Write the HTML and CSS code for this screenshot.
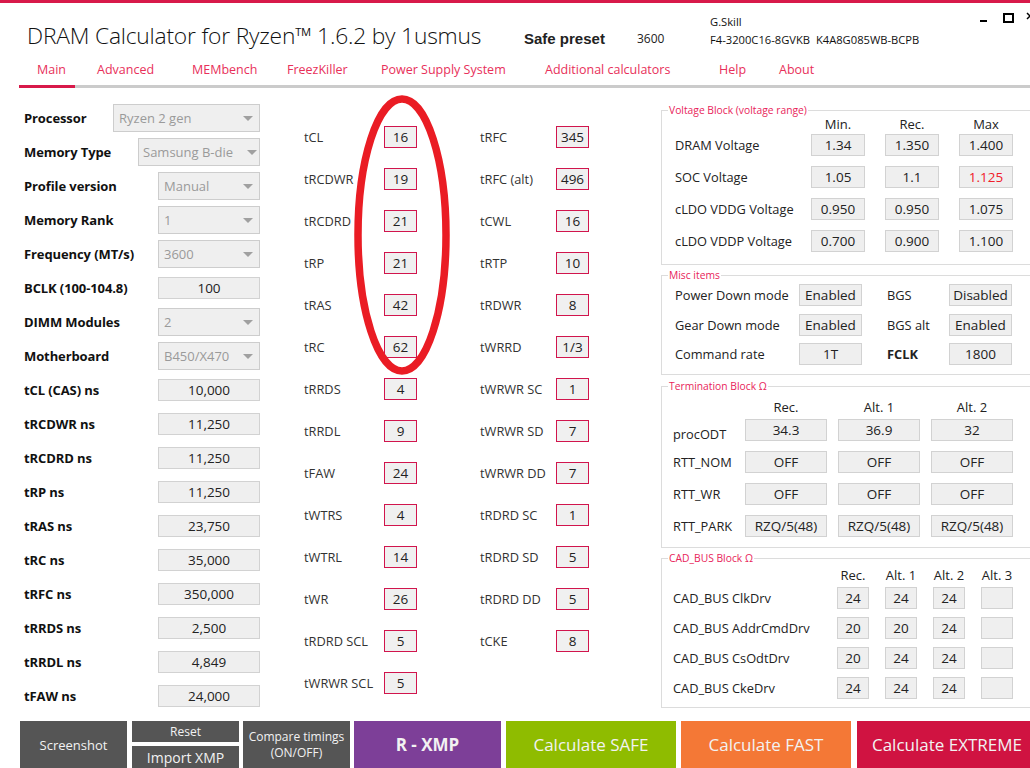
FILE: index.html
```html
<!DOCTYPE html>
<html>
<head>
<meta charset="utf-8">
<link rel="stylesheet" href="styles.css">
</head>
<body>
<div class="topline"></div>
<header class="header">
  <h1 class="title">DRAM Calculator for Ryzen™ 1.6.2 by 1usmus</h1>
  <div class="preset"><span class="preset-label">Safe preset</span><span class="preset-val">3600</span></div>
  <div class="module"><div>G.Skill</div><div>F4-3200C16-8GVKB&nbsp; K4A8G085WB-BCPB</div></div>
  <svg class="winctl" width="60" height="24" viewBox="0 0 60 24">
    <rect x="10" y="15" width="7" height="2" fill="#000"/>
    <rect x="34" y="9" width="9" height="8" fill="none" stroke="#000" stroke-width="2"/>
    <path d="M57 8 L63 14 M63 8 L57 14" stroke="#000" stroke-width="1.5"/>
  </svg>
</header>
<nav class="tabs">
  <span class="tab first">Main</span>
  <span class="tab">Advanced</span>
  <span class="tab">MEMbench</span>
  <span class="tab">FreezKiller</span>
  <span class="tab">Power Supply System</span>
  <span class="tab">Additional calculators</span>
  <span class="tab">Help</span>
  <span class="tab">About</span>
</nav>
<div class="tabline"><div class="tabline-active"></div></div>

<main class="main">
  <section class="left">
    <div class="lrow"><span class="llabel">Processor</span><div class="combo w147"><span>Ryzen 2 gen</span><i class="arrow"></i></div></div>
    <div class="lrow"><span class="llabel">Memory Type</span><div class="combo w122"><span>Samsung B-die</span><i class="arrow"></i></div></div>
    <div class="lrow"><span class="llabel">Profile version</span><div class="combo"><span>Manual</span><i class="arrow"></i></div></div>
    <div class="lrow"><span class="llabel">Memory Rank</span><div class="combo"><span>1</span><i class="arrow"></i></div></div>
    <div class="lrow"><span class="llabel">Frequency (MT/s)</span><div class="combo"><span>3600</span><i class="arrow"></i></div></div>
    <div class="lrow"><span class="llabel">BCLK (100-104.8)</span><div class="vbox">100</div></div>
    <div class="lrow"><span class="llabel">DIMM Modules</span><div class="combo"><span>2</span><i class="arrow"></i></div></div>
    <div class="lrow"><span class="llabel">Motherboard</span><div class="combo"><span>B450/X470</span><i class="arrow"></i></div></div>
    <div class="lrow"><span class="llabel">tCL (CAS) ns</span><div class="vbox">10,000</div></div>
    <div class="lrow"><span class="llabel">tRCDWR ns</span><div class="vbox">11,250</div></div>
    <div class="lrow"><span class="llabel">tRCDRD ns</span><div class="vbox">11,250</div></div>
    <div class="lrow"><span class="llabel">tRP ns</span><div class="vbox">11,250</div></div>
    <div class="lrow"><span class="llabel">tRAS ns</span><div class="vbox">23,750</div></div>
    <div class="lrow"><span class="llabel">tRC ns</span><div class="vbox">35,000</div></div>
    <div class="lrow"><span class="llabel">tRFC ns</span><div class="vbox">350,000</div></div>
    <div class="lrow"><span class="llabel">tRRDS ns</span><div class="vbox">2,500</div></div>
    <div class="lrow"><span class="llabel">tRRDL ns</span><div class="vbox">4,849</div></div>
    <div class="lrow"><span class="llabel">tFAW ns</span><div class="vbox">24,000</div></div>
  </section>

  <section class="timings">
    <div class="tcol c1">
      <div class="trow"><span>tCL</span><b class="tbox">16</b></div>
      <div class="trow"><span>tRCDWR</span><b class="tbox">19</b></div>
      <div class="trow"><span>tRCDRD</span><b class="tbox">21</b></div>
      <div class="trow"><span>tRP</span><b class="tbox">21</b></div>
      <div class="trow"><span>tRAS</span><b class="tbox">42</b></div>
      <div class="trow"><span>tRC</span><b class="tbox">62</b></div>
      <div class="trow"><span>tRRDS</span><b class="tbox">4</b></div>
      <div class="trow"><span>tRRDL</span><b class="tbox">9</b></div>
      <div class="trow"><span>tFAW</span><b class="tbox">24</b></div>
      <div class="trow"><span>tWTRS</span><b class="tbox">4</b></div>
      <div class="trow"><span>tWTRL</span><b class="tbox">14</b></div>
      <div class="trow"><span>tWR</span><b class="tbox">26</b></div>
      <div class="trow"><span>tRDRD SCL</span><b class="tbox">5</b></div>
      <div class="trow"><span>tWRWR SCL</span><b class="tbox">5</b></div>
    </div>
    <div class="tcol c2">
      <div class="trow"><span>tRFC</span><b class="tbox">345</b></div>
      <div class="trow"><span>tRFC (alt)</span><b class="tbox">496</b></div>
      <div class="trow"><span>tCWL</span><b class="tbox">16</b></div>
      <div class="trow"><span>tRTP</span><b class="tbox">10</b></div>
      <div class="trow"><span>tRDWR</span><b class="tbox">8</b></div>
      <div class="trow"><span>tWRRD</span><b class="tbox">1/3</b></div>
      <div class="trow"><span>tWRWR SC</span><b class="tbox">1</b></div>
      <div class="trow"><span>tWRWR SD</span><b class="tbox">7</b></div>
      <div class="trow"><span>tWRWR DD</span><b class="tbox">7</b></div>
      <div class="trow"><span>tRDRD SC</span><b class="tbox">1</b></div>
      <div class="trow"><span>tRDRD SD</span><b class="tbox">5</b></div>
      <div class="trow"><span>tRDRD DD</span><b class="tbox">5</b></div>
      <div class="trow"><span>tCKE</span><b class="tbox">8</b></div>
    </div>
    <svg class="ellipse" width="100" height="285" viewBox="0 0 100 285">
      <ellipse cx="49" cy="141" rx="44" ry="136" fill="none" stroke="#ea1c24" stroke-width="7.5"/>
    </svg>
  </section>

  <section class="right">
    <fieldset class="group g-volt">
      <legend>Voltage Block (voltage range)</legend>
      <div class="volt-grid">
        <span></span><span class="hdr">Min.</span><span class="hdr">Rec.</span><span class="hdr">Max</span>
        <span class="rlabel">DRAM Voltage</span><div class="gbox">1.34</div><div class="gbox">1.350</div><div class="gbox">1.400</div>
        <span class="rlabel">SOC Voltage</span><div class="gbox">1.05</div><div class="gbox">1.1</div><div class="gbox red">1.125</div>
        <span class="rlabel">cLDO VDDG Voltage</span><div class="gbox">0.950</div><div class="gbox">0.950</div><div class="gbox">1.075</div>
        <span class="rlabel">cLDO VDDP Voltage</span><div class="gbox">0.700</div><div class="gbox">0.900</div><div class="gbox">1.100</div>
      </div>
    </fieldset>
    <fieldset class="group g-misc">
      <legend>Misc items</legend>
      <div class="misc-grid">
        <span class="rlabel">Power Down mode</span><div class="gbox">Enabled</div><span class="rlabel">BGS</span><div class="gbox">Disabled</div>
        <span class="rlabel">Gear Down mode</span><div class="gbox">Enabled</div><span class="rlabel">BGS alt</span><div class="gbox">Enabled</div>
        <span class="rlabel">Command rate</span><div class="gbox">1T</div><span class="rlabel bold">FCLK</span><div class="gbox">1800</div>
      </div>
    </fieldset>
    <fieldset class="group g-term">
      <legend>Termination Block Ω</legend>
      <div class="term-grid">
        <span></span><span class="hdr">Rec.</span><span class="hdr">Alt. 1</span><span class="hdr">Alt. 2</span>
        <span class="rlabel low">procODT</span><div class="gbox">34.3</div><div class="gbox">36.9</div><div class="gbox">32</div>
        <span class="rlabel">RTT_NOM</span><div class="gbox">OFF</div><div class="gbox">OFF</div><div class="gbox">OFF</div>
        <span class="rlabel">RTT_WR</span><div class="gbox">OFF</div><div class="gbox">OFF</div><div class="gbox">OFF</div>
        <span class="rlabel">RTT_PARK</span><div class="gbox">RZQ/5(48)</div><div class="gbox">RZQ/5(48)</div><div class="gbox">RZQ/5(48)</div>
      </div>
    </fieldset>
    <fieldset class="group g-cad">
      <legend>CAD_BUS Block Ω</legend>
      <div class="cad-grid">
        <span></span><span class="hdr">Rec.</span><span class="hdr">Alt. 1</span><span class="hdr">Alt. 2</span><span class="hdr">Alt. 3</span>
        <span class="rlabel">CAD_BUS ClkDrv</span><div class="gbox">24</div><div class="gbox">24</div><div class="gbox">24</div><div class="gbox"></div>
        <span class="rlabel">CAD_BUS AddrCmdDrv</span><div class="gbox">20</div><div class="gbox">20</div><div class="gbox">24</div><div class="gbox"></div>
        <span class="rlabel">CAD_BUS CsOdtDrv</span><div class="gbox">20</div><div class="gbox">24</div><div class="gbox">24</div><div class="gbox"></div>
        <span class="rlabel">CAD_BUS CkeDrv</span><div class="gbox">24</div><div class="gbox">24</div><div class="gbox">24</div><div class="gbox"></div>
      </div>
    </fieldset>
  </section>
</main>

<footer class="actions">
  <div class="btn gray w107">Screenshot</div>
  <div class="stack w107">
    <div class="btn gray small">Reset</div>
    <div class="btn gray import">Import XMP</div>
  </div>
  <div class="btn gray w107 compare">Compare timings<br>(ON/OFF)</div>
  <div class="btn purple">R - XMP</div>
  <div class="btn green">Calculate SAFE</div>
  <div class="btn orange">Calculate FAST</div>
  <div class="btn crimson">Calculate EXTREME</div>
</footer>
</body>
</html>
```

FILE: styles.css
```css
* { box-sizing: border-box; }
html, body { margin: 0; padding: 0; }
body {
  width: 1030px;
  height: 768px;
  overflow: hidden;
  position: relative;
  background: #fff;
  font-family: "Open Sans", "Noto Sans", sans-serif;
  color: #222;
}
.topline { height: 3px; background: #d8194a; }

.header {
  height: 54px;
  display: flex;
  align-items: flex-start;
  padding-left: 27px;
  position: relative;
}
.title {
  margin: 18px 0 0 0;
  width: 497px;
  flex: none;
  font-size: 22.8px;
  font-weight: 300;
  line-height: 30px;
  color: #111;
  white-space: nowrap;
  letter-spacing: -0.2px;
}
.preset {
  margin-top: 27px;
  display: flex;
  align-items: center;
  line-height: 18px;
  flex: none;
}
.preset-label {
  font-family: "Liberation Sans", Arial, sans-serif;
  font-weight: bold;
  font-size: 15px;
  width: 113px;
}
.preset-val { font-size: 12px; width: 73px; }
.module {
  margin-top: 10px;
  font-size: 11.2px;
  line-height: 18px;
  color: #111;
  white-space: nowrap;
}
.winctl { position: absolute; right: 0; top: 2px; }

.tabs {
  height: 28px;
  display: grid;
  grid-template-columns: 78px 95px 95px 94px 164px 174px 60px auto;
  padding-left: 19px;
  font-size: 12.5px;
  line-height: 25px;
  color: #e8305a;
}
.tab { white-space: nowrap; }
.tab.first { padding-left: 18px; }
.tabline { margin-left: 19px; height: 3px; background: #cbcbcb; }
.tabline-active { width: 56px; height: 3px; background: #d8194a; }

.main { display: flex; height: 633px; }

.left { width: 260px; flex: none; padding: 13px 0 0 24px; }
.lrow {
  height: 34px;
  display: flex;
  align-items: center;
  justify-content: space-between;
}
.llabel { font-weight: 700; font-size: 13px; color: #111; letter-spacing: -0.1px; white-space: nowrap; }
.combo {
  width: 102px;
  height: 28px;
  flex: none;
  border: 1px solid #cdcdcd;
  background: #efefef;
  display: flex;
  align-items: center;
  justify-content: space-between;
  padding: 0 6px 0 5px;
  color: #9a9a9a;
  font-size: 13px;
  white-space: nowrap;
}
.combo.w147 { width: 147px; }
.combo.w122 { width: 122px; padding-left: 4px; padding-right: 2px; }
.arrow {
  width: 0; height: 0;
  border-left: 5px solid transparent;
  border-right: 5px solid transparent;
  border-top: 5px solid #a0a0a0;
  flex: none;
}
.vbox {
  width: 102px;
  height: 22px;
  flex: none;
  border: 1px solid #d2d2d2;
  background: #efefef;
  text-align: center;
  font-size: 13.5px;
  line-height: 20px;
  color: #222;
}

.timings {
  position: relative;
  flex: none;
  margin-left: 44px;
  padding-top: 28px;
  display: flex;
  gap: 63px;
}
.tcol { display: flex; flex-direction: column; }
.trow {
  height: 42px;
  display: flex;
  align-items: center;
  font-size: 12.8px;
  color: #333;
  white-space: nowrap;
}
.c1 .trow span { width: 80px; }
.c2 .trow span { width: 76px; }
.tbox {
  width: 33px;
  height: 22px;
  border: 1px solid #d1154d;
  background: #f0f0f0;
  font-weight: normal;
  text-align: center;
  font-size: 13.5px;
  line-height: 20px;
  color: #222;
}
.ellipse { position: absolute; left: 49px; top: 6px; }

.right { margin-left: 72px; width: 380px; padding-top: 16px; flex: none; }
.group {
  margin: 0;
  padding: 0;
  border: 1px solid #dcdcdc;
  min-width: 0;
}
.group legend {
  font-size: 10.3px;
  line-height: 12px;
  color: #e8245a;
  padding: 0 1px;
  margin-left: 6px;
}
.g-volt { height: 161px; }
.g-misc { height: 106px; margin-top: 4px; }
.g-term { height: 168px; margin-top: 5px; }
.g-cad { height: 156px; margin-top: 4px; }

.hdr { text-align: center; font-size: 13px; height: 16px; line-height: 16px; color: #222; align-self: start; white-space: nowrap; }
.rlabel { font-size: 12.8px; color: #222; white-space: nowrap; align-self: center; }
.rlabel.bold { font-weight: 700; }
.rlabel.low { padding-top: 8px; }
.gbox {
  height: 22px;
  border: 1px solid #d2d2d2;
  background: #efefef;
  text-align: center;
  font-size: 13.5px;
  line-height: 20px;
  color: #222;
  white-space: nowrap;
}
.gbox.red { color: #f0202a; }

.volt-grid {
  margin-left: 13px;
  display: grid;
  grid-template-columns: 116px 54px 54px 54px;
  grid-template-rows: 8px repeat(4, 22px);
  column-gap: 20px;
  row-gap: 10px;
}
.misc-grid {
  margin-left: 13px;
  padding-top: 3px;
  display: grid;
  grid-template-columns: 124px 63px 87px 63px;
  grid-auto-rows: 22px;
  column-gap: 0;
  row-gap: 7.5px;
}
.misc-grid .rlabel:nth-child(4n+3) { padding-left: 25px; }
.term-grid {
  margin-left: 11px;
  padding-top: 7px;
  display: grid;
  grid-template-columns: 61px 82px 82px 82px;
  grid-template-rows: 10px repeat(4, 22px);
  column-gap: 11px;
  row-gap: 10px;
}
.cad-grid {
  margin-left: 11px;
  padding-top: 3px;
  display: grid;
  grid-template-columns: 148px 32px 32px 32px 32px;
  grid-template-rows: 12px repeat(4, 22px);
  column-gap: 16px;
  row-gap: 8px;
}

.actions {
  height: 47px;
  display: flex;
  padding-left: 20px;
}
.btn {
  color: #f2f2f2;
  display: flex;
  align-items: center;
  justify-content: center;
  text-align: center;
  font-size: 17px;
  white-space: nowrap;
  flex: none;
}
.gray { background: #555555; font-size: 13px; }
.w107 { width: 107px; flex: none; }
.stack { display: flex; flex-direction: column; gap: 4px; margin-left: 5px; }
.btn.small { height: 21px; font-size: 12px; }
.btn.import { flex: 1; font-size: 14px; }
.compare { margin-left: 4px; font-size: 12px; line-height: 16px; }
.purple { background: #7d3f98; width: 147px; margin-left: 4px; font-weight: 700; }
.green { background: #8fbc00; width: 170px; margin-left: 5px; }
.orange { background: #f47836; width: 170px; margin-left: 5px; }
.crimson { background: #d01341; width: 180px; margin-left: 6px; }
```
